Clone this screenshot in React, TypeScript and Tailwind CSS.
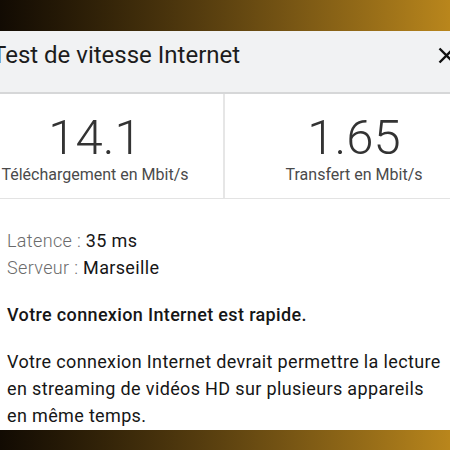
import React from 'react';

const font = { fontFamily: 'Roboto, "Noto Sans", Arial, sans-serif' };

function Stat({ value, label }: { value: string; label: string }) {
  return (
    <div className="flex flex-col items-center pt-[19px]">
      <div className="text-[49px] font-light leading-[50px] text-[#333333]">{value}</div>
      <div className="mt-[2px] text-[16px] leading-[20px] text-[#4a4a4a]">{label}</div>
    </div>
  );
}

export default function App() {
  return (
    <div className="relative h-[450px] w-[450px] overflow-hidden bg-white" style={font}>
      <div className="h-[31px] w-full bg-gradient-to-r from-[#120b03] via-[#5e4310] to-[#b9861c]" />
      <div className="-ml-[33px] w-[516px]">
        <div className="flex h-[63px] items-start justify-between border-b-2 border-[#d6d7d8] bg-[#f1f2f3] pl-[25px] pr-[28px] pt-[10px]">
          <span className="text-[24px] leading-[28px] text-[#1c1c1c]">Test de vitesse Internet</span>
          <svg width="17" height="17" viewBox="0 0 17 17" className="mt-[6px] text-[#111]">
            <path d="M1.5 1.5 L15.5 15.5 M15.5 1.5 L1.5 15.5" stroke="currentColor" strokeWidth="2.4" />
          </svg>
        </div>
        <div className="grid h-[105px] grid-cols-2 border-b border-[#e3e3e3]">
          <div className="border-r-2 border-[#e6e6e6]">
            <Stat value="14.1" label="Téléchargement en Mbit/s" />
          </div>
          <Stat value="1.65" label="Transfert en Mbit/s" />
        </div>
        <div className="pl-[40px] pt-[28px] text-[18px] tracking-[0.35px] text-[#161616]">
          <div className="leading-[27px]">
            <span className="font-light text-[#6b6b6b]">Latence : </span>35 ms
          </div>
          <div className="leading-[27px]">
            <span className="font-light text-[#6b6b6b]">Serveur : </span>Marseille
          </div>
          <div className="mt-[20px] font-medium leading-[27px]">Votre connexion Internet est rapide.</div>
          <div className="mt-[20px] w-[440px] leading-[27px]">
            Votre connexion Internet devrait permettre la lecture en streaming de vidéos HD sur plusieurs appareils en même temps.
          </div>
        </div>
      </div>
      <div className="absolute bottom-0 left-0 h-[20px] w-full bg-gradient-to-r from-[#120b03] via-[#5e4310] to-[#b9861c]" />
    </div>
  );
}
